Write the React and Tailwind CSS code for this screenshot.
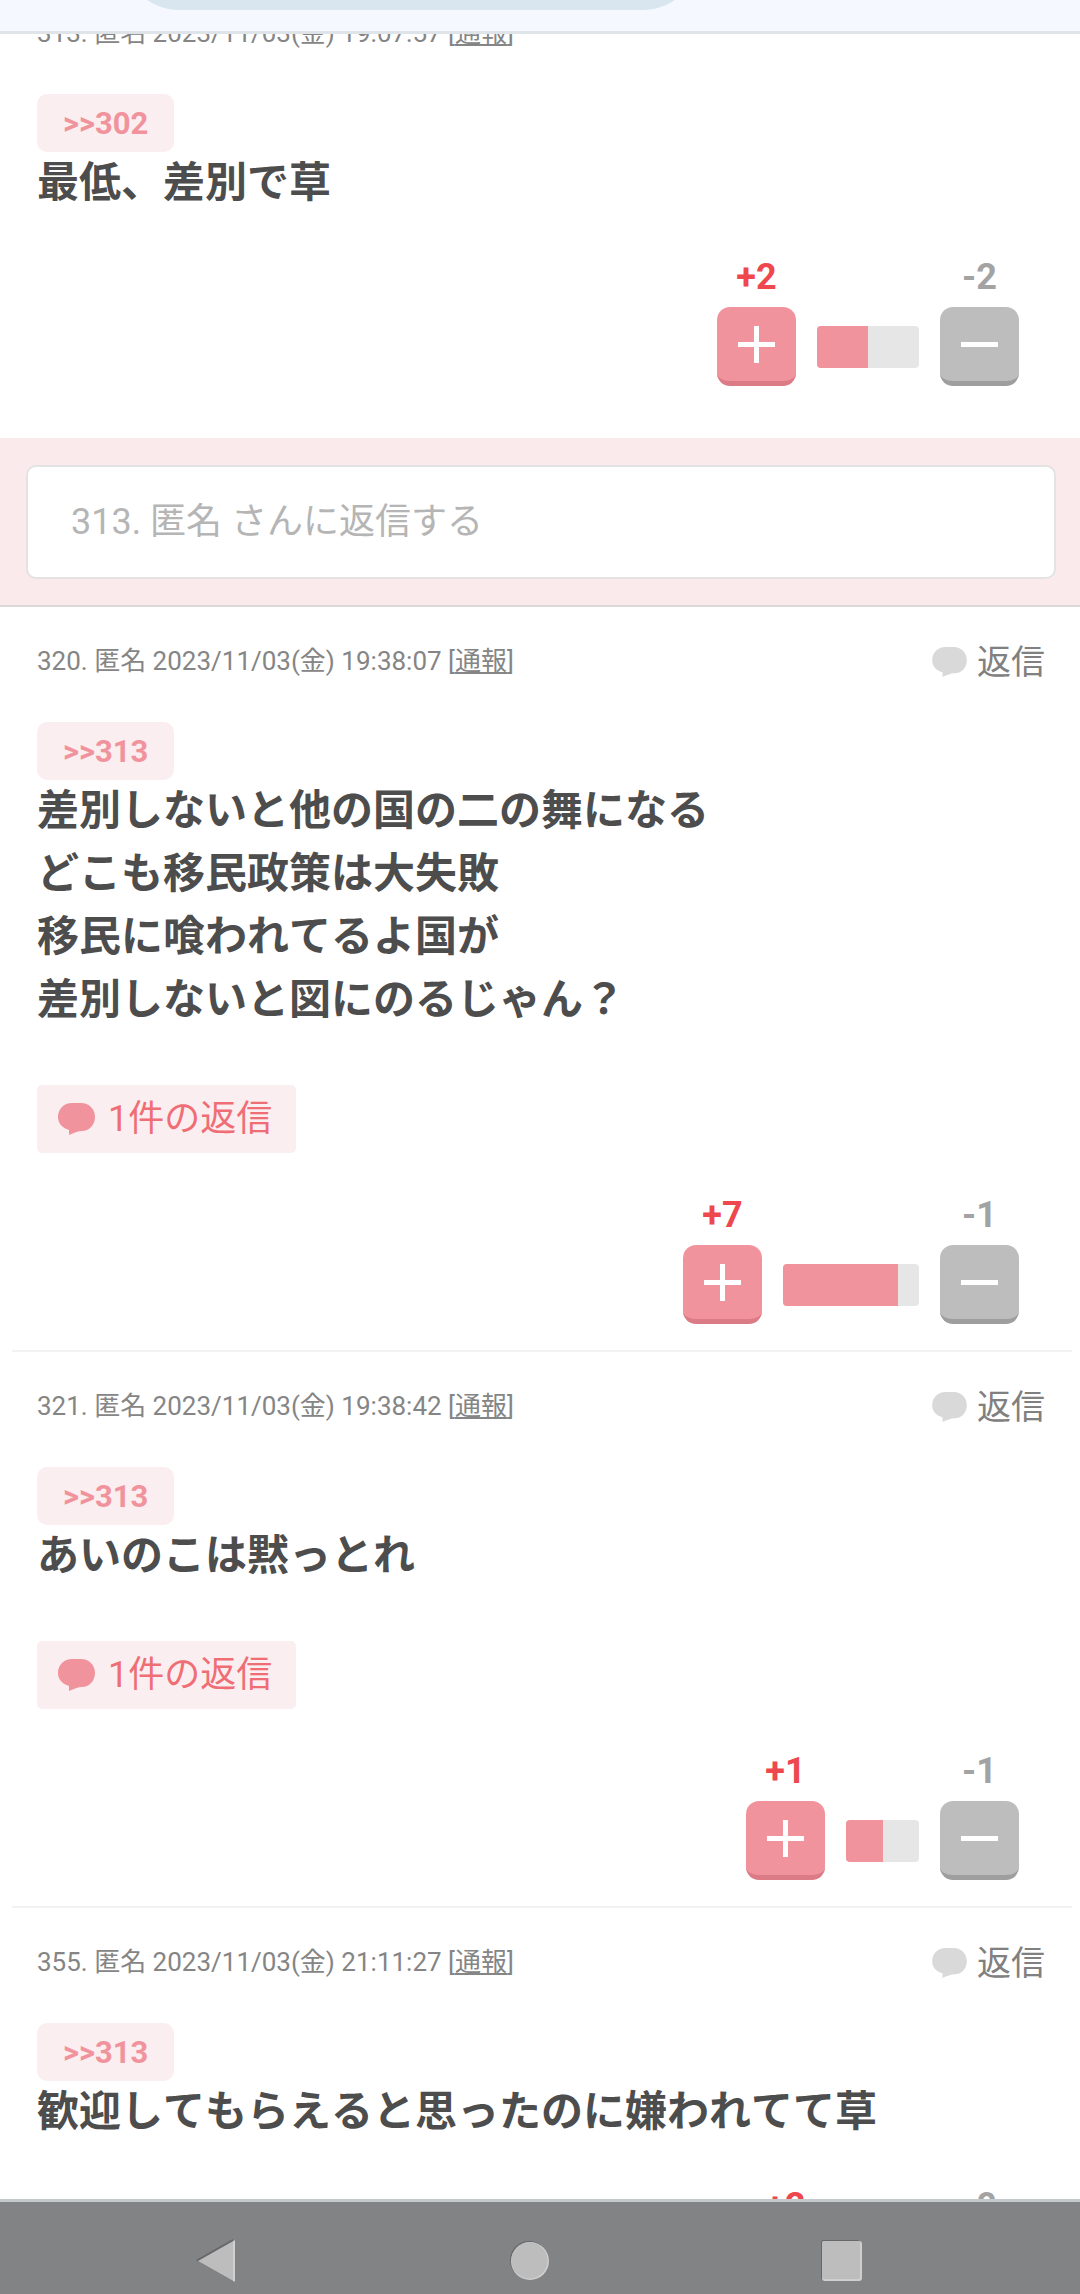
import React from 'react';

const comments = [
    {
        id: 313,
        date: '2023/11/03(金) 19:07:57',
        quote: 302,
        lines: ['最低、差別で草'],
        replies: 0,
        plus: 2,
        minus: 2,
        barWidth: 102,
        barFill: 51,
        open: true,
    },
    {
        id: 320,
        date: '2023/11/03(金) 19:38:07',
        quote: 313,
        lines: ['差別しないと他の国の二の舞になる', 'どこも移民政策は大失敗', '移民に喰われてるよ国が', '差別しないと図にのるじゃん？'],
        replies: 1,
        plus: 7,
        minus: 1,
        barWidth: 136,
        barFill: 115,
    },
    {
        id: 321,
        date: '2023/11/03(金) 19:38:42',
        quote: 313,
        lines: ['あいのこは黙っとれ'],
        replies: 1,
        plus: 1,
        minus: 1,
        barWidth: 73,
        barFill: 37,
    },
    {
        id: 355,
        date: '2023/11/03(金) 21:11:27',
        quote: 313,
        lines: ['歓迎してもらえると思ったのに嫌われてて草'],
        replies: 0,
        plus: 2,
        minus: 0,
        barWidth: 73,
        barFill: 73,
    },
];

const BubbleIcon = ({ className }) => (
    <svg viewBox="0 0 37 32" className={className} fill="currentColor" aria-hidden="true">
        <path d="M14 0H23C31 0 37 6 37 14C37 22 31 28 24 28C20 28 16 30 11 32V27C4 25 0 20 0 14C0 6 6 0 14 0Z" />
    </svg>
);

const PlusIcon = () => (
    <svg viewBox="0 0 37 37" className="size-[37px]" fill="#fff" aria-hidden="true">
        <path d="M16 0H21V16H37V21H21V37H16V21H0V16H16Z" />
    </svg>
);

const MinusIcon = () => (
    <svg viewBox="0 0 37 37" className="size-[37px]" fill="#fff" aria-hidden="true">
        <path d="M0 16H37V21H0Z" />
    </svg>
);

const Votes = ({ comment }) => (
    <div className="flex items-end justify-end gap-[21px] pt-8 pr-[26px]">
        <div className="flex flex-col items-center">
            <span className="text-4xl leading-[60px] font-bold text-[#ee474d]">+{comment.plus}</span>
            <button
                type="button"
                aria-label="プラス"
                className="flex h-[79px] w-[79px] items-center justify-center rounded-[13px] border-b-[5px] border-[#db7b85] bg-[#f1939c]"
            >
                <PlusIcon />
            </button>
        </div>
        <div
            className="mb-[18px] h-[42px] overflow-hidden rounded bg-[#e6e6e6]"
            style={{ width: comment.barWidth }}
        >
            <div className="h-full bg-[#f1939c]" style={{ width: comment.barFill }} />
        </div>
        <div className="flex flex-col items-center">
            <span className="text-4xl leading-[60px] font-bold text-[#a3a3a3]">-{comment.minus}</span>
            <button
                type="button"
                aria-label="マイナス"
                className="flex h-[79px] w-[79px] items-center justify-center rounded-[13px] border-b-[5px] border-[#9e9e9e] bg-[#bdbdbd]"
            >
                <MinusIcon />
            </button>
        </div>
    </div>
);

const Comment = ({ comment }) => (
    <article className="pr-[35px] pl-[37px]">
        <div className="mb-2 flex h-[107px] items-center justify-between">
            <p className="text-[26px] leading-10 text-[#858585]">
                {comment.id}. 匿名 {comment.date} [
                <a href="#report" className="underline">通報</a>]
            </p>
            {!comment.open && (
                <a href="#reply" className="flex items-center gap-2.5 pt-[3px] text-[34px] leading-10 text-[#808080]">
                    <BubbleIcon className="h-[30px] w-[35px] text-[#d9d9d9]" />
                    返信
                </a>
            )}
        </div>

        <a
            href="#quote"
            className="flex h-[58px] w-fit items-center rounded-[10px] bg-[#fbeef0] px-[26px] text-[31px] leading-none font-bold text-[#f1939c]"
        >
            &gt;&gt;{comment.quote}
        </a>
        <div className="-mt-[5px] pb-[5px] font-['Noto_Sans_CJK_JP',sans-serif] text-[42px] leading-[63px] font-bold text-[#4d4d4d]">
            {comment.lines.map((line) => (
                <p key={line}>{line}</p>
            ))}
        </div>

        {comment.replies > 0 && (
            <a
                href="#replies"
                className="mt-[53px] flex h-[68px] w-fit items-center gap-[13px] rounded-[5px] bg-[#fbeef0] pr-6 pl-[21px] text-4xl text-[#ef6e76]"
            >
                <BubbleIcon className="h-8 w-[37px] text-[#f1939c]" />
                {comment.replies}件の返信
            </a>
        )}

        <Votes comment={comment} />
    </article>
);

const ReplyForm = ({ id }) => (
    <div className="mt-[52px] border-b-2 border-[#d9d9d9] bg-[#faeaeb] pt-[27px] pr-6 pb-[26px] pl-[26px]">
        <input
            type="text"
            aria-label="返信"
            placeholder={`${id}. 匿名 さんに返信する`}
            className="block h-[114px] w-full rounded-[10px] border-2 border-[#e3e3e3] bg-white px-[43px] text-4xl text-[#4d4d4d] [font-kerning:none] placeholder:text-[#b5b5b5]"
        />
    </div>
);

const SystemNav = () => (
    <nav className="grid h-[95px] shrink-0 grid-cols-3 items-center border-t-[3px] border-[#c4c9cc] bg-[#828385] pt-[26px] pr-[81px] pl-[59px]">
        <button type="button" aria-label="戻る" className="flex justify-center">
            <svg viewBox="0 0 44 48" className="h-12 w-11">
                <path d="M40 3V45L3 24Z" fill="#666769" transform="translate(-1 -1)" />
                <path d="M41 3V45L4 24Z" fill="#bdbdbd" />
                <path d="M40 4V44" stroke="#d0d0d0" strokeWidth="2" />
            </svg>
        </button>
        <button type="button" aria-label="ホーム" className="flex justify-center">
            <svg viewBox="0 0 44 48" className="h-12 w-11">
                <circle cx="22" cy="23" r="19" fill="#666769" />
                <circle cx="23" cy="24" r="19" fill="#cfcfcf" />
                <circle cx="22.5" cy="23.5" r="18" fill="#bdbdbd" />
            </svg>
        </button>
        <button type="button" aria-label="履歴" className="flex justify-center">
            <svg viewBox="0 0 44 48" className="h-12 w-11">
                <rect x="1" y="3" width="39" height="40" rx="3" fill="#666769" />
                <rect x="2" y="4" width="40" height="40" rx="3" fill="#cfcfcf" />
                <rect x="2" y="4" width="38" height="38" rx="2" fill="#bdbdbd" />
            </svg>
        </button>
    </nav>
);

const App = () => {
    return (
        <div className="flex h-screen flex-col overflow-hidden bg-white font-[Roboto,'Noto_Sans_CJK_JP',sans-serif] [font-kerning:none]">
            {/* Bottom edge of the browser toolbar */}
            <header className="flex h-[34px] shrink-0 items-end overflow-hidden border-b-[3px] border-[#dfe4e8] bg-[#f5f9ff] pb-[21px] pl-[123px]">
                <div className="h-28 w-[576px] shrink-0 rounded-full bg-[#dae6ef]" />
            </header>

            <main className="min-h-0 flex-1 overflow-hidden">
                {/* The thread is scrolled part way into the first comment */}
                <div className="-mt-[55px]">
                    {comments.map((comment, index) => (
                        <React.Fragment key={comment.id}>
                            <Comment comment={comment} />
                            {comment.open && <ReplyForm id={comment.id} />}
                            {!comment.open && index < comments.length - 1 && (
                                <hr className="mt-[26px] mr-2 ml-3 border-t-2 border-[#f2f2f2]" />
                            )}
                        </React.Fragment>
                    ))}
                </div>
            </main>

            <SystemNav />
        </div>
    );
};

export default App;
